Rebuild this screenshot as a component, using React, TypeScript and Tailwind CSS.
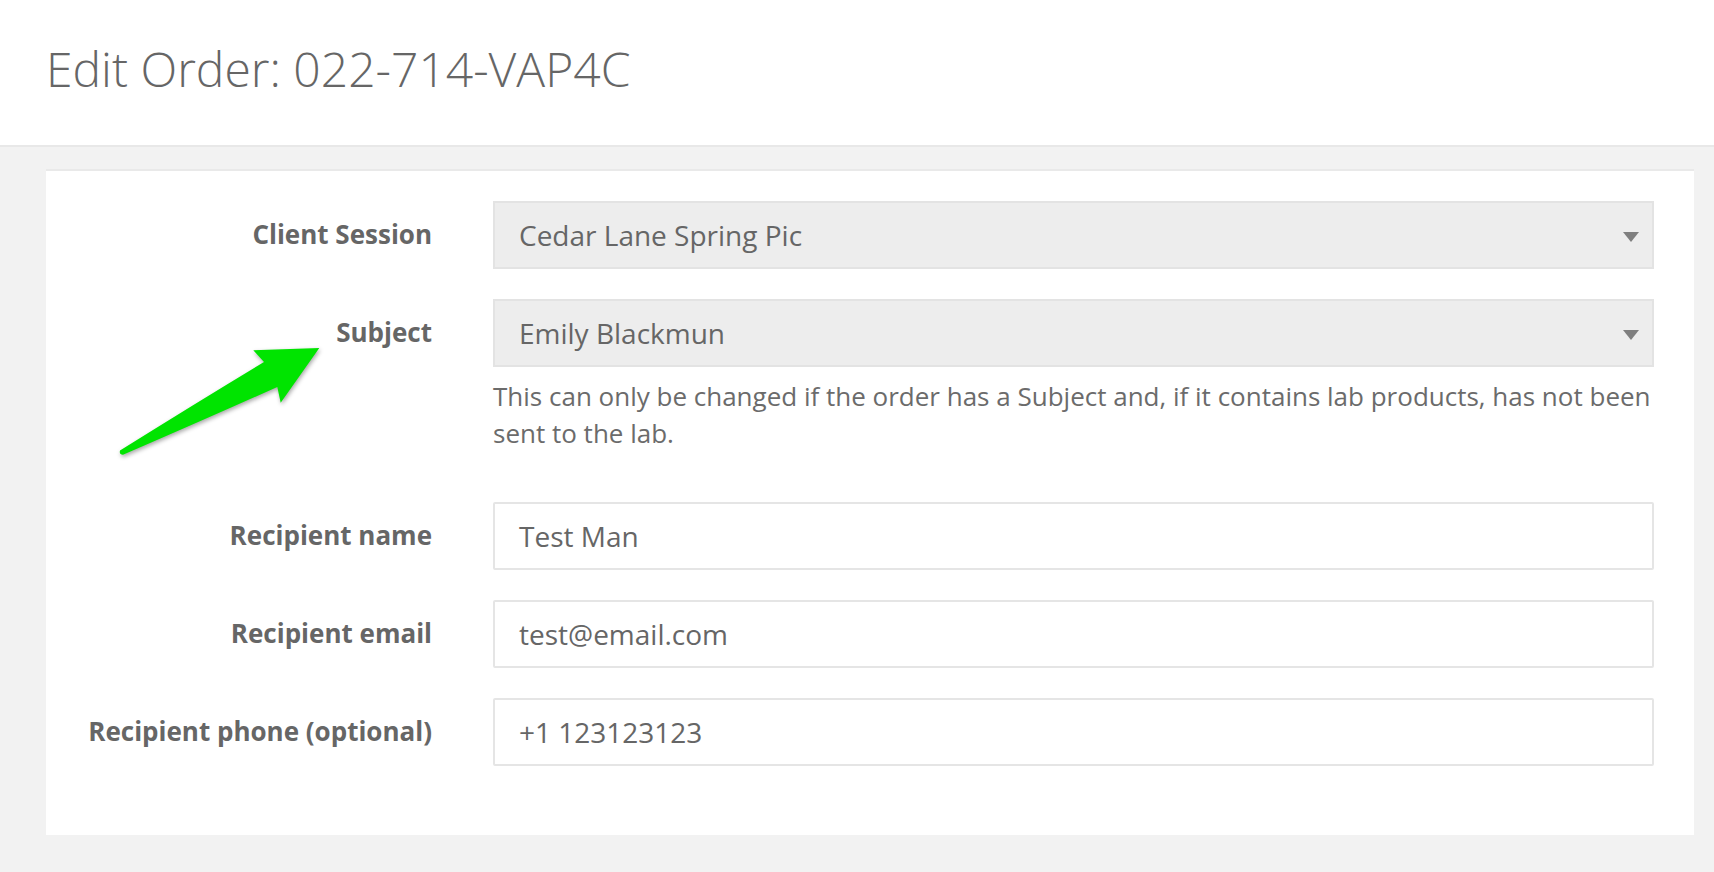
import { ReactNode } from 'react';

function Caret() {
  return (
    <svg
      width="16"
      height="10"
      viewBox="0 0 16 10"
      className="absolute right-[13px] top-1/2 -translate-y-[3px]"
      aria-hidden="true"
    >
      <polygon points="0,0 16,0 8,10" fill="#7f7f7f" />
    </svg>
  );
}

function SelectBox({ value }: { value: string }) {
  return (
    <div className="relative flex h-[68px] items-center border-2 border-[#e3e3e3] bg-[#ededed] px-[24px] text-[28px] text-[#666]">
      <span>{value}</span>
      <Caret />
    </div>
  );
}

function TextBox({ value }: { value: string }) {
  return (
    <div className="flex h-[68px] items-center rounded-[2px] border-2 border-[#e5e5e5] bg-white px-[24px] text-[28px] text-[#666]">
      {value}
    </div>
  );
}

function Row({ label, children }: { label: string; children: ReactNode }) {
  return (
    <div className="grid grid-cols-[386px_1fr] gap-x-[61px]">
      <div className="flex h-[68px] items-center justify-end pb-[2px] text-[26px] font-bold text-[#666]">
        {label}
      </div>
      <div>{children}</div>
    </div>
  );
}

export default function App() {
  return (
    <div
      className="min-h-[872px] bg-[#f2f2f2]"
      style={{ fontFamily: '"Open Sans", "Liberation Sans", sans-serif' }}
    >
      <header className="flex h-[147px] items-center border-b-2 border-[#e8e8e8] bg-white px-[46px] pb-[6px]">
        <h1 className="text-[48px] font-light leading-[1.1] text-[#666]">
          Edit Order: 022-714-VAP4C
        </h1>
      </header>

      <div className="pl-[46px] pr-[20px] pt-[22px]">
        <div className="relative border-t-2 border-[#e9e9e9] bg-white pb-[69px] pr-[40px] pt-[30px]">
          {/* annotation arrow pointing at the Subject label */}
          <svg
            className="pointer-events-none absolute left-0 top-0"
            width="300"
            height="300"
            viewBox="0 0 300 300"
            aria-hidden="true"
            style={{ filter: 'drop-shadow(1px 2px 2px rgba(0,0,0,0.35))' }}
          >
            <path
              d="M273.3 177 L207.3 179.3 L218 191 Q150 232 74 279.5 Q73 283.5 77 283.8 Q160 248 231.3 216 L234.7 231.7 Z"
              fill="#00e400"
            />
          </svg>

          <div className="flex flex-col gap-[30px]">
            <Row label="Client Session">
              <SelectBox value="Cedar Lane Spring Pic" />
            </Row>
            <Row label="Subject">
              <SelectBox value="Emily Blackmun" />
              <p className="mt-[11px] pb-[20px] text-[26px] leading-[37px] text-[#6b6b6b]">
                This can only be changed if the order has a Subject and, if it
                contains lab products, has not been sent to the lab.
              </p>
            </Row>
            <Row label="Recipient name">
              <TextBox value="Test Man" />
            </Row>
            <Row label="Recipient email">
              <TextBox value="test@email.com" />
            </Row>
            <Row label="Recipient phone (optional)">
              <TextBox value="+1 123123123" />
            </Row>
          </div>
        </div>
      </div>
    </div>
  );
}
